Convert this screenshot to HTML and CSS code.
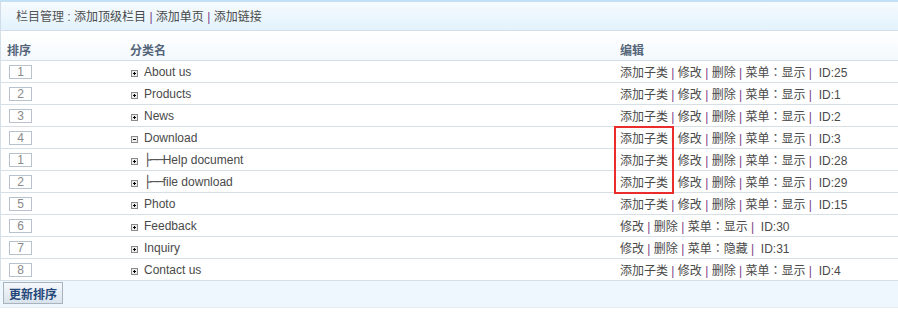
FILE: index.html
```html
<!DOCTYPE html>
<html lang="zh-CN">
<head>
    <meta charset="UTF-8">
    <title>栏目管理</title>
    <link rel="stylesheet" href="styles.css">
</head>
<body>
    <div class="panel">
        <div class="panel-head">
            栏目管理 : <a href="#">添加顶级栏目</a> <span class="sep">|</span> <a href="#">添加单页</a> <span class="sep">|</span> <a href="#">添加链接</a>
        </div>

        <table class="cat-table">
            <thead>
                <tr>
                    <th class="col-order">排序</th>
                    <th class="col-name">分类名</th>
                    <th class="col-edit">编辑</th>
                </tr>
            </thead>
            <tbody>
                <tr>
                    <td class="col-order"><input class="order-input" type="text" value="1"></td>
                    <td class="col-name"><svg class="tree-icon" width="7" height="7" viewBox="0 0 7 7"><rect x="0.5" y="0.5" width="6" height="6" fill="#eee" stroke="#8a8a8a"/><path d="M2 3.5h3M3.5 2v3" stroke="#000"/></svg>About us</td>
                    <td class="col-edit"><a href="#">添加子类</a> <span class="sep">|</span> <a href="#">修改</a> <span class="sep">|</span> <a href="#">删除</a> <span class="sep">|</span> 菜单<span class="colon" lang="zh-TW">：</span><a href="#">显示</a> <span class="sep">|</span> &nbsp;ID:25</td>
                </tr>
                <tr>
                    <td class="col-order"><input class="order-input" type="text" value="2"></td>
                    <td class="col-name"><svg class="tree-icon" width="7" height="7" viewBox="0 0 7 7"><rect x="0.5" y="0.5" width="6" height="6" fill="#eee" stroke="#8a8a8a"/><path d="M2 3.5h3M3.5 2v3" stroke="#000"/></svg>Products</td>
                    <td class="col-edit"><a href="#">添加子类</a> <span class="sep">|</span> <a href="#">修改</a> <span class="sep">|</span> <a href="#">删除</a> <span class="sep">|</span> 菜单<span class="colon" lang="zh-TW">：</span><a href="#">显示</a> <span class="sep">|</span> &nbsp;ID:1</td>
                </tr>
                <tr>
                    <td class="col-order"><input class="order-input" type="text" value="3"></td>
                    <td class="col-name"><svg class="tree-icon" width="7" height="7" viewBox="0 0 7 7"><rect x="0.5" y="0.5" width="6" height="6" fill="#eee" stroke="#8a8a8a"/><path d="M2 3.5h3M3.5 2v3" stroke="#000"/></svg>News</td>
                    <td class="col-edit"><a href="#">添加子类</a> <span class="sep">|</span> <a href="#">修改</a> <span class="sep">|</span> <a href="#">删除</a> <span class="sep">|</span> 菜单<span class="colon" lang="zh-TW">：</span><a href="#">显示</a> <span class="sep">|</span> &nbsp;ID:2</td>
                </tr>
                <tr>
                    <td class="col-order"><input class="order-input" type="text" value="4"></td>
                    <td class="col-name"><svg class="tree-icon" width="7" height="7" viewBox="0 0 7 7"><rect x="0.5" y="0.5" width="6" height="6" fill="#eee" stroke="#8a8a8a"/><path d="M2 3.5h3" stroke="#000"/></svg>Download</td>
                    <td class="col-edit"><a href="#">添加子类</a> <span class="sep">|</span> <a href="#">修改</a> <span class="sep">|</span> <a href="#">删除</a> <span class="sep">|</span> 菜单<span class="colon" lang="zh-TW">：</span><a href="#">显示</a> <span class="sep">|</span> &nbsp;ID:3</td>
                </tr>
                <tr>
                    <td class="col-order"><input class="order-input" type="text" value="1"></td>
                    <td class="col-name"><svg class="tree-icon" width="7" height="7" viewBox="0 0 7 7"><rect x="0.5" y="0.5" width="6" height="6" fill="#eee" stroke="#8a8a8a"/><path d="M2 3.5h3M3.5 2v3" stroke="#000"/></svg><span class="branch">├──</span>Help document</td>
                    <td class="col-edit"><a href="#">添加子类</a> <span class="sep">|</span> <a href="#">修改</a> <span class="sep">|</span> <a href="#">删除</a> <span class="sep">|</span> 菜单<span class="colon" lang="zh-TW">：</span><a href="#">显示</a> <span class="sep">|</span> &nbsp;ID:28</td>
                </tr>
                <tr>
                    <td class="col-order"><input class="order-input" type="text" value="2"></td>
                    <td class="col-name"><svg class="tree-icon" width="7" height="7" viewBox="0 0 7 7"><rect x="0.5" y="0.5" width="6" height="6" fill="#eee" stroke="#8a8a8a"/><path d="M2 3.5h3M3.5 2v3" stroke="#000"/></svg><span class="branch">├──</span>file download</td>
                    <td class="col-edit"><a href="#">添加子类</a> <span class="sep">|</span> <a href="#">修改</a> <span class="sep">|</span> <a href="#">删除</a> <span class="sep">|</span> 菜单<span class="colon" lang="zh-TW">：</span><a href="#">显示</a> <span class="sep">|</span> &nbsp;ID:29</td>
                </tr>
                <tr>
                    <td class="col-order"><input class="order-input" type="text" value="5"></td>
                    <td class="col-name"><svg class="tree-icon" width="7" height="7" viewBox="0 0 7 7"><rect x="0.5" y="0.5" width="6" height="6" fill="#eee" stroke="#8a8a8a"/><path d="M2 3.5h3M3.5 2v3" stroke="#000"/></svg>Photo</td>
                    <td class="col-edit"><a href="#">添加子类</a> <span class="sep">|</span> <a href="#">修改</a> <span class="sep">|</span> <a href="#">删除</a> <span class="sep">|</span> 菜单<span class="colon" lang="zh-TW">：</span><a href="#">显示</a> <span class="sep">|</span> &nbsp;ID:15</td>
                </tr>
                <tr>
                    <td class="col-order"><input class="order-input" type="text" value="6"></td>
                    <td class="col-name"><svg class="tree-icon" width="7" height="7" viewBox="0 0 7 7"><rect x="0.5" y="0.5" width="6" height="6" fill="#eee" stroke="#8a8a8a"/><path d="M2 3.5h3M3.5 2v3" stroke="#000"/></svg>Feedback</td>
                    <td class="col-edit"><a href="#">修改</a> <span class="sep">|</span> <a href="#">删除</a> <span class="sep">|</span> 菜单<span class="colon" lang="zh-TW">：</span><a href="#">显示</a> <span class="sep">|</span> &nbsp;ID:30</td>
                </tr>
                <tr>
                    <td class="col-order"><input class="order-input" type="text" value="7"></td>
                    <td class="col-name"><svg class="tree-icon" width="7" height="7" viewBox="0 0 7 7"><rect x="0.5" y="0.5" width="6" height="6" fill="#eee" stroke="#8a8a8a"/><path d="M2 3.5h3M3.5 2v3" stroke="#000"/></svg>Inquiry</td>
                    <td class="col-edit"><a href="#">修改</a> <span class="sep">|</span> <a href="#">删除</a> <span class="sep">|</span> 菜单<span class="colon" lang="zh-TW">：</span><a href="#">隐藏</a> <span class="sep">|</span> &nbsp;ID:31</td>
                </tr>
                <tr>
                    <td class="col-order"><input class="order-input" type="text" value="8"></td>
                    <td class="col-name"><svg class="tree-icon" width="7" height="7" viewBox="0 0 7 7"><rect x="0.5" y="0.5" width="6" height="6" fill="#eee" stroke="#8a8a8a"/><path d="M2 3.5h3M3.5 2v3" stroke="#000"/></svg>Contact us</td>
                    <td class="col-edit"><a href="#">添加子类</a> <span class="sep">|</span> <a href="#">修改</a> <span class="sep">|</span> <a href="#">删除</a> <span class="sep">|</span> 菜单<span class="colon" lang="zh-TW">：</span><a href="#">显示</a> <span class="sep">|</span> &nbsp;ID:4</td>
                </tr>
            </tbody>
        </table>

        <div class="panel-foot">
            <button class="btn-sort">更新排序</button>
        </div>

        <!-- red marker round the sub-category links -->
        <div class="mark"></div>
    </div>
</body>
</html>
```

FILE: styles.css
```css
body {
    margin: 0;
    font-family: "Liberation Sans", "Noto Sans CJK SC", sans-serif;
    font-size: 12px;
    color: #4a4a4a;
    background-color: #fff;
}
a {
    color: #4a4a4a;
    text-decoration: none;
}
.sep {
    color: #7a3f86;
}
.colon {
    font-family: "Noto Sans CJK TC", sans-serif;
}
.panel {
    position: relative;
    width: 898px;
}
.panel-head {
    height: 28px;
    line-height: 30px;
    padding-left: 15px;
    border-top: 2px solid #c4e0f4;
    border-bottom: 1px solid #d3dfe8;
    border-left: 1px solid #d0dde8;
    background: linear-gradient(#f6fbfe, #e3f2fc);
    color: #555;
}
.cat-table {
    width: 100%;
    border-collapse: collapse;
    table-layout: fixed;
    border-left: 1px solid #d6dee6;
}
.cat-table th {
    height: 21px;
    padding: 8px 0 0 8px;
    text-align: left;
    font-weight: bold;
    color: #54657a;
    background: linear-gradient(#fff, #f4f9fd);
    border-bottom: 1px solid #d6dee6;
}
.cat-table th.col-order {
    width: 115px;
    padding-left: 6px;
}
.cat-table th.col-name {
    width: 482px;
}
.cat-table td {
    height: 21px;
    padding: 0;
    border-bottom: 1px solid #d6dee6;
    white-space: nowrap;
}
.cat-table td.col-order {
    padding-left: 8px;
}
.cat-table td.col-name {
    padding-left: 9px;
}
.cat-table td.col-edit {
    padding-left: 8px;
}
.order-input {
    display: block;
    width: 21px;
    height: 12px;
    padding: 0;
    border: 1px solid #b7c2ce;
    font-family: "Liberation Sans", sans-serif;
    font-size: 12px;
    line-height: 12px;
    color: #8a8a8a;
    text-align: center;
}
.tree-icon {
    display: inline-block;
    vertical-align: -1px;
    margin-right: 6px;
}
.branch {
    font-family: "DejaVu Sans", sans-serif;
    letter-spacing: -1px;
}
.panel-foot {
    height: 25px;
    padding: 1px 0 0 3px;
    background-color: #eef7fd;
    border-bottom: 1px solid #e6eef4;
}
.btn-sort {
    display: block;
    width: 60px;
    height: 22px;
    padding: 0;
    border: 1px solid #a9b3bd;
    background: linear-gradient(#f5f8fb, #d9e3ec);
    font-family: "Noto Sans CJK SC", sans-serif;
    font-size: 12px;
    font-weight: bold;
    color: #25477a;
    cursor: pointer;
}
.mark {
    position: absolute;
    left: 614px;
    top: 126px;
    width: 56px;
    height: 64px;
    border: 2px solid #ea2c2c;
}
```
